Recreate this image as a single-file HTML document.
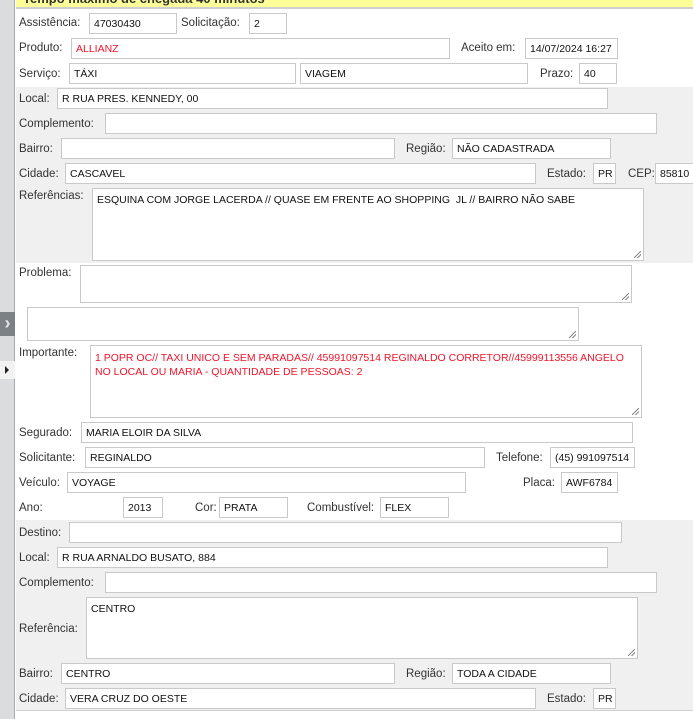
<!DOCTYPE html>
<html><head><meta charset="utf-8"><style>
*{margin:0;padding:0;box-sizing:border-box}
body{width:693px;height:719px;position:relative;overflow:hidden;background:#fff;font-family:"Liberation Sans","DejaVu Sans",sans-serif;}
.g{position:absolute;left:0;top:0;width:15px;height:719px;background:#dadcde;border-right:1px solid #a9abad}
.hdr{position:absolute;left:16px;top:0;right:0;height:9px;background:#ffff99;border-bottom:2px solid #cfcfcf;overflow:hidden}
.sec{position:absolute;left:16px;right:0;background:#f0f0f0}
.l{position:absolute;font-size:11.5px;color:#333;white-space:nowrap;line-height:14px}
.i{position:absolute;background:#fff;border:1px solid #c9c9c9;font-size:10.5px;color:#111;padding:4px 0 0 4px;white-space:nowrap;overflow:hidden;line-height:13px}
.ta{padding:5px 0 0 4px;white-space:normal}
.ta:after{content:"";position:absolute;right:2px;bottom:2px;width:7px;height:7px;background:linear-gradient(135deg,transparent 45%,#888 45%,#888 55%,transparent 55%,transparent 70%,#888 70%,#888 80%,transparent 80%)}
.r{color:#f0142a}
</style></head><body>
<div class="g"></div>
<div style="position:absolute;left:0;top:312px;width:15px;height:24px;background:#7c8187;color:#e5e5e5;font-size:18px;line-height:22px;text-align:center;font-weight:bold">›</div>
<div style="position:absolute;left:0;top:361px;width:15px;height:18px;background:#f2f2f2"></div>
<div style="position:absolute;left:5px;top:366px;width:0;height:0;border-left:4px solid #222;border-top:4px solid transparent;border-bottom:4px solid transparent"></div>
<div class="hdr"><div style="position:absolute;left:7px;top:-9px;font-size:13px;font-weight:bold;color:#333;white-space:nowrap">Tempo máximo de chegada 40 minutos</div></div>
<div class="sec" style="top:87px;height:176px"></div>
<div class="sec" style="top:520px;height:191px;border-bottom:1px solid #d0d0d0"></div>

<div class="l" style="left:19px;top:16px">Assistência:</div>
<div class="i" style="left:89px;top:13px;width:88px;height:21px">47030430</div>
<div class="l" style="left:181px;top:16px">Solicitação:</div>
<div class="i" style="left:249px;top:13px;width:38px;height:21px">2</div>

<div class="l" style="left:19px;top:41px">Produto:</div>
<div class="i r" style="left:71px;top:38px;width:379px;height:21px">ALLIANZ</div>
<div class="l" style="left:461px;top:41px">Aceito em:</div>
<div class="i" style="left:525px;top:38px;width:93px;height:21px">14/07/2024 16:27</div>

<div class="l" style="left:19px;top:67px">Serviço:</div>
<div class="i" style="left:69px;top:63px;width:227px;height:21px">TÁXI</div>
<div class="i" style="left:300px;top:63px;width:228px;height:21px">VIAGEM</div>
<div class="l" style="left:540px;top:67px">Prazo:</div>
<div class="i" style="left:579px;top:63px;width:38px;height:21px">40</div>

<div class="l" style="left:19px;top:92px">Local:</div>
<div class="i" style="left:57px;top:88px;width:551px;height:21px">R RUA PRES. KENNEDY, 00</div>
<div class="l" style="left:19px;top:117px">Complemento:</div>
<div class="i" style="left:105px;top:113px;width:552px;height:21px"></div>
<div class="l" style="left:19px;top:142px">Bairro:</div>
<div class="i" style="left:61px;top:138px;width:334px;height:21px"></div>
<div class="l" style="left:406px;top:142px">Região:</div>
<div class="i" style="left:452px;top:138px;width:159px;height:21px">NÃO CADASTRADA</div>
<div class="l" style="left:19px;top:167px">Cidade:</div>
<div class="i" style="left:65px;top:163px;width:471px;height:21px">CASCAVEL</div>
<div class="l" style="left:547px;top:167px">Estado:</div>
<div class="i" style="left:593px;top:163px;width:23px;height:21px">PR</div>
<div class="l" style="left:628px;top:167px">CEP:</div>
<div class="i" style="left:655px;top:163px;width:45px;height:21px">85810</div>
<div class="l" style="left:19px;top:189px">Referências:</div>
<div class="i ta" style="left:92px;top:188px;width:552px;height:73px">ESQUINA COM JORGE LACERDA // QUASE EM FRENTE AO SHOPPING&nbsp; JL // BAIRRO NÃO SABE</div>

<div class="l" style="left:19px;top:266px">Problema:</div>
<div class="i ta" style="left:80px;top:265px;width:552px;height:38px"></div>
<div class="i ta" style="left:27px;top:307px;width:552px;height:34px"></div>
<div class="l" style="left:19px;top:346px">Importante:</div>
<div class="i ta r" style="left:90px;top:345px;width:552px;height:73px;line-height:14px">1 POPR OC// TAXI UNICO E SEM PARADAS// 45991097514 REGINALDO CORRETOR//45999113556 ANGELO NO LOCAL OU MARIA - QUANTIDADE DE PESSOAS: 2</div>

<div class="l" style="left:19px;top:426px">Segurado:</div>
<div class="i" style="left:81px;top:422px;width:552px;height:21px">MARIA ELOIR DA SILVA</div>
<div class="l" style="left:19px;top:451px">Solicitante:</div>
<div class="i" style="left:85px;top:447px;width:400px;height:21px">REGINALDO</div>
<div class="l" style="left:496px;top:451px">Telefone:</div>
<div class="i" style="left:550px;top:447px;width:85px;height:21px">(45) 991097514</div>
<div class="l" style="left:19px;top:476px">Veículo:</div>
<div class="i" style="left:67px;top:472px;width:399px;height:21px">VOYAGE</div>
<div class="l" style="left:523px;top:476px">Placa:</div>
<div class="i" style="left:561px;top:472px;width:57px;height:21px">AWF6784</div>
<div class="l" style="left:19px;top:501px">Ano:</div>
<div class="i" style="left:123px;top:497px;width:40px;height:21px">2013</div>
<div class="l" style="left:195px;top:501px">Cor:</div>
<div class="i" style="left:219px;top:497px;width:69px;height:21px">PRATA</div>
<div class="l" style="left:307px;top:501px">Combustível:</div>
<div class="i" style="left:380px;top:497px;width:69px;height:21px">FLEX</div>

<div class="l" style="left:19px;top:526px">Destino:</div>
<div class="i" style="left:69px;top:522px;width:553px;height:21px"></div>
<div class="l" style="left:19px;top:551px">Local:</div>
<div class="i" style="left:57px;top:547px;width:551px;height:21px">R RUA ARNALDO BUSATO, 884</div>
<div class="l" style="left:19px;top:576px">Complemento:</div>
<div class="i" style="left:105px;top:572px;width:552px;height:21px"></div>
<div class="l" style="left:19px;top:622px">Referência:</div>
<div class="i ta" style="left:86px;top:597px;width:552px;height:62px">CENTRO</div>
<div class="l" style="left:19px;top:667px">Bairro:</div>
<div class="i" style="left:61px;top:663px;width:334px;height:21px">CENTRO</div>
<div class="l" style="left:406px;top:667px">Região:</div>
<div class="i" style="left:452px;top:663px;width:159px;height:21px">TODA A CIDADE</div>
<div class="l" style="left:19px;top:692px">Cidade:</div>
<div class="i" style="left:65px;top:688px;width:471px;height:21px">VERA CRUZ DO OESTE</div>
<div class="l" style="left:547px;top:692px">Estado:</div>
<div class="i" style="left:593px;top:688px;width:23px;height:21px">PR</div>
</body></html>
